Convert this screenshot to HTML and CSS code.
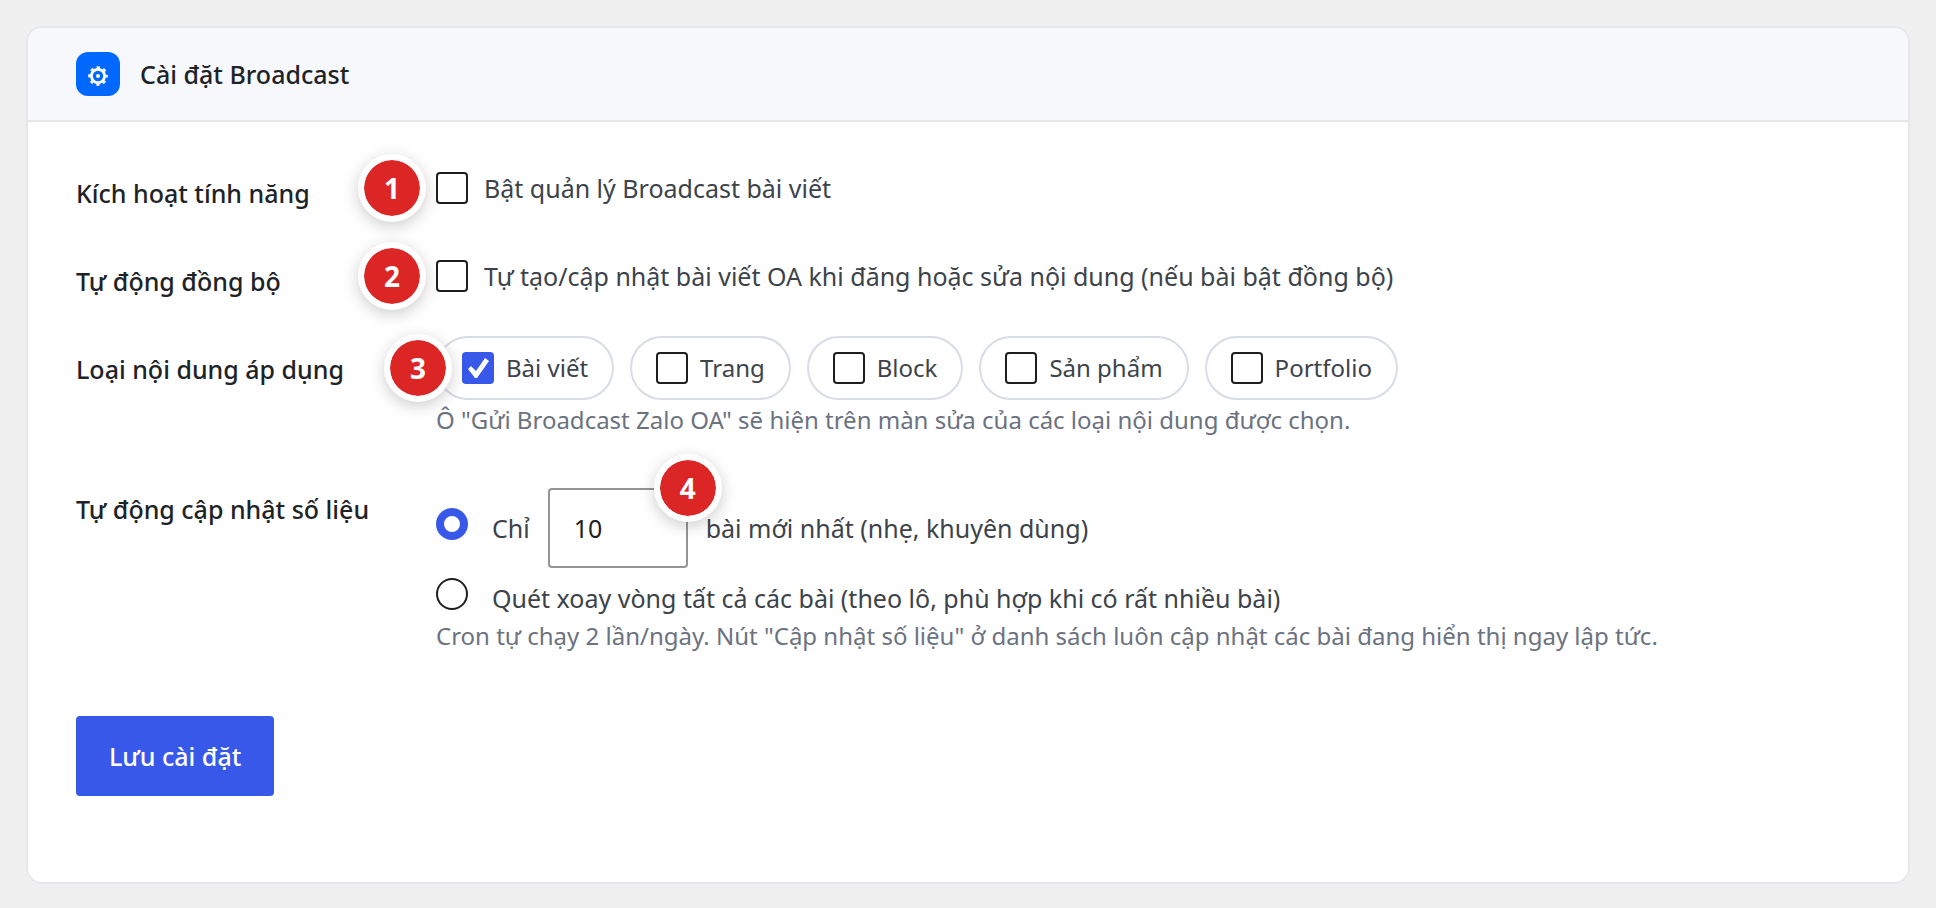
FILE: index.html
```html
<!DOCTYPE html>
<html lang="vi">
<head>
<meta charset="utf-8">
<title>Cài đặt Broadcast</title>
<link rel="stylesheet" href="styles.css">
</head>
<body>
<main class="card">
  <header class="card-header">
    <span class="card-icon">
      <svg viewBox="0 0 20 20" width="20" height="20" aria-hidden="true">
        <g fill="none" stroke="#fff">
          <circle cx="10" cy="10" r="6.6" stroke-width="2.8"/>
          <circle cx="10" cy="10" r="8.7" stroke-width="2.2" stroke-dasharray="3.2 3.633" stroke-dashoffset="1.6"/>
        </g>
        <circle cx="10" cy="10" r="2" fill="#fff"/>
      </svg>
    </span>
    <h1 class="card-title">Cài đặt Broadcast</h1>
  </header>

  <form class="settings">
    <div class="row">
      <label class="row-label" for="enable">Kích hoạt tính năng</label>
      <div class="row-field">
        <div class="option marked">
          <span class="badge badge-outside">1</span>
          <input class="check" type="checkbox" id="enable">
          <label for="enable">Bật quản lý Broadcast bài viết</label>
        </div>
      </div>
    </div>

    <div class="row">
      <label class="row-label" for="sync">Tự động đồng bộ</label>
      <div class="row-field">
        <div class="option marked">
          <span class="badge badge-outside">2</span>
          <input class="check" type="checkbox" id="sync">
          <label for="sync">Tự tạo/cập nhật bài viết OA khi đăng hoặc sửa nội dung (nếu bài bật đồng bộ)</label>
        </div>
      </div>
    </div>

    <div class="row" role="group" aria-labelledby="types-label">
      <span class="row-label" id="types-label">Loại nội dung áp dụng</span>
      <div class="row-field row-field-pills">
        <div class="pills marked">
          <span class="badge badge-edge">3</span>
          <label class="pill"><input class="check" type="checkbox" checked>Bài viết</label>
          <label class="pill"><input class="check" type="checkbox">Trang</label>
          <label class="pill"><input class="check" type="checkbox">Block</label>
          <label class="pill"><input class="check" type="checkbox">Sản phẩm</label>
          <label class="pill"><input class="check" type="checkbox">Portfolio</label>
        </div>
        <p class="hint hint-pills">Ô "Gửi Broadcast Zalo OA" sẽ hiện trên màn sửa của các loại nội dung được chọn.</p>
      </div>
    </div>

    <div class="row" role="radiogroup" aria-labelledby="stats-label">
      <span class="row-label" id="stats-label">Tự động cập nhật số liệu</span>
      <div class="row-field row-field-radios">
        <div class="radio-line">
          <input class="radio" type="radio" name="stats" id="stats-latest" checked>
          <label for="stats-latest">Chỉ</label>
          <span class="number marked">
            <input class="number-input" type="text" inputmode="numeric" value="10" aria-label="Số bài mới nhất">
            <span class="badge badge-corner">4</span>
          </span>
          <label for="stats-latest">bài mới nhất (nhẹ, khuyên dùng)</label>
        </div>
        <div class="radio-line">
          <input class="radio" type="radio" name="stats" id="stats-all">
          <label for="stats-all">Quét xoay vòng tất cả các bài (theo lô, phù hợp khi có rất nhiều bài)</label>
        </div>
        <p class="hint">Cron tự chạy 2 lần/ngày. Nút "Cập nhật số liệu" ở danh sách luôn cập nhật các bài đang hiển thị ngay lập tức.</p>
      </div>
    </div>

    <button class="save" type="submit">Lưu cài đặt</button>
  </form>
</main>
</body>
</html>
```
FILE: styles.css
```css
* {
  box-sizing: border-box;
}

body {
  margin: 0;
  padding: 26px 26px 24px;
  background: #f0f0f0;
  color: #3c434a;
  font: 25px/36px "Noto Sans", "Open Sans", sans-serif;
}

h1,
p {
  margin: 0;
}

.card {
  border: 2px solid #e5e7eb;
  border-radius: 16px;
  background: #fff;
}

.card-header {
  display: flex;
  align-items: center;
  gap: 20px;
  padding: 24px 48px;
  border-bottom: 2px solid #e5e7eb;
  border-radius: 14px 14px 0 0;
  background: #f6f8fc;
}

.card-icon {
  display: grid;
  place-items: center;
  width: 44px;
  height: 44px;
  padding-top: 3px;
  border-radius: 12px;
  background: #0068ff;
}

.card-title {
  color: #1d2327;
  font-size: 25px;
  font-weight: 500;
}

.settings {
  padding: 22px 48px 86px;
}

.row {
  display: grid;
  grid-template-columns: 360px 1fr;
}

.row-label {
  padding-top: 31px;
  color: #1d2327;
  font-weight: 500;
}

.row-field {
  padding: 26px 0;
}

.row-field-pills {
  padding: 16px 0 20px;
}

.row-field-radios {
  padding: 28px 0 62px;
}

.marked {
  position: relative;
}

.option {
  display: flex;
  align-items: center;
  gap: 16px;
}

.check,
.radio {
  appearance: none;
  flex: none;
  width: 32px;
  height: 32px;
  margin: 0;
  border: 2px solid #1e1e1e;
  background: #fff;
}

.check {
  border-radius: 4px;
}

.check:checked {
  border-color: #3858e9;
  background: #3858e9;
}

.check:checked::before {
  content: "";
  display: block;
  width: 28px;
  height: 28px;
  background: #fff;
  clip-path: polygon(4px 15px, 7px 12px, 12px 17px, 21px 4px, 25px 7px, 13px 24px, 11px 24px);
}

.radio {
  margin-right: 24px;
  margin-bottom: 8px;
  border-radius: 50%;
}

.radio:checked {
  border: 8px solid #3858e9;
}

.pills {
  display: flex;
  flex-wrap: wrap;
  gap: 16px;
}

.pill {
  display: flex;
  align-items: center;
  gap: 12px;
  height: 64px;
  padding: 0 24px;
  border: 2px solid #d8dce6;
  border-radius: 32px;
  font-size: 24px;
}

.hint {
  color: #6b7280;
  font-size: 24px;
}

.hint-pills {
  line-height: 40px;
}

.radio-line {
  display: flex;
  align-items: center;
}

.radio-line + .radio-line {
  margin-top: 10px;
}

.number {
  margin: 0 18px;
}

.number-input {
  display: block;
  width: 140px;
  height: 80px;
  padding: 0 24px;
  border: 2px solid #949494;
  border-radius: 4px;
  background: #fff;
  color: #1e1e1e;
  font: inherit;
}

.badge {
  position: absolute;
  width: 68px;
  height: 68px;
  border: 6px solid #fff;
  border-radius: 50%;
  background: #dc2626;
  background-clip: padding-box;
  box-shadow: 0 4px 16px rgba(0, 0, 0, 0.2);
  color: #fff;
  font-size: 28px;
  font-weight: 700;
  line-height: 56px;
  text-align: center;
}

.badge-outside {
  top: -16px;
  left: -78px;
}

.badge-edge {
  top: -2px;
  left: -52px;
}

.badge-corner {
  top: -34px;
  right: -34px;
}

.save {
  display: block;
  height: 80px;
  padding: 0 33px;
  border: 0;
  border-radius: 4px;
  background: #3858e9;
  color: #fff;
  font: inherit;
  font-weight: 500;
}
```
